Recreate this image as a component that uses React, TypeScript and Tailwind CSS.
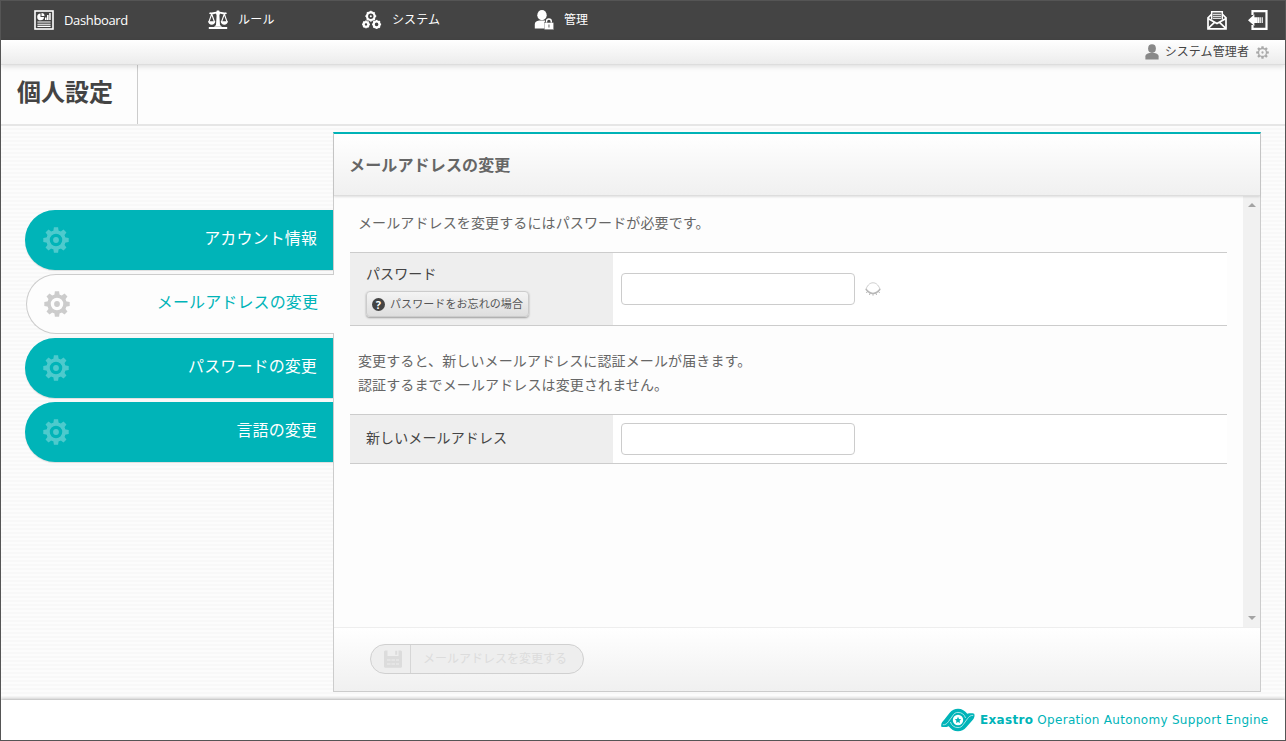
import React from "react";

const TEETH = [0, 45, 90, 135, 180, 225, 270, 315];

function Gear({ className = "", ring = 3.5, hole = 2, dot = true }: { className?: string; ring?: number; hole?: number; dot?: boolean }) {
  return (
    <svg viewBox="0 0 26 26" className={className} fill="currentColor">
      <g>
        {TEETH.map((a) => (
          <path key={a} d="M10.300 4.400 10.900.3h4.200l.6 4.100z" transform={`rotate(${a} 13 13)`} />
        ))}
        <circle cx="13" cy="13" r="8" fill="none" stroke="currentColor" strokeWidth={ring} />
        {dot && <circle cx="13" cy="13" r={hole + 0.9} />}
      </g>
    </svg>
  );
}

function ReportIcon() {
  return (
    <svg viewBox="0 0 20 20" className="h-5 w-5 shrink-0">
      <rect x="1" y="1" width="18" height="18" fill="none" stroke="#fff" strokeWidth="1.6" />
      <path d="M6.500 3.500A3.400 3.400 0 1 0 10 7H6.500z" fill="#fff" />
      <path d="M7.500 3v3h3a3 3 0 0 0-3-3zM11 7.500h1.600V10H11zM13 5h1.600v5H13zM15.200 3h1.500v7h-1.500z" fill="#fff" />
      <path d="M3.400 12h13.200M3.400 14.200h13.200M3.400 16.400h13.200" stroke="#fff" strokeWidth="1.100" />
    </svg>
  );
}

function ScalesIcon() {
  return (
    <svg viewBox="0 0 20 20" className="h-5 w-5 shrink-0" fill="none" stroke="#fff">
      <path d="M1.500 3c3 1.500 5.500-.6 8.500-.6s5.500 2.100 8.500.6" strokeWidth="1.800" />
      <path d="M3.700 4 .9 12M3.700 4l2.800 8M16.300 4l-2.800 8M16.300 4l2.800 8" strokeWidth="1.100" />
      <path d="M.1 11.300h7.200c-.2 2.300-1.600 3.500-3.600 3.500s-3.400-1.200-3.600-3.500zM12.700 11.300h7.200c-.2 2.300-1.600 3.500-3.600 3.500s-3.400-1.200-3.600-3.500z" fill="#fff" stroke="none" />
      <path d="M8.800.5h2.400l.8 3-.6 2 .6 9.500 2 1.700H6L8 15l.6-9.500-.6-2z" fill="#fff" stroke="none" />
      <path d="M.8 17h18.400v2H.8z" fill="#fff" stroke="none" />
    </svg>
  );
}

function GearsIcon() {
  const gears = [
    { x: 8.8, y: 6.2, r: 3.8 },
    { x: 4, y: 14.4, r: 2.3 },
    { x: 14.6, y: 14.4, r: 2.9 },
  ];
  return (
    <svg viewBox="0 0 20 20" className="h-5 w-5 shrink-0" fill="none" stroke="#fff">
      {gears.map((g) => (
        <g key={g.x}>
          <circle cx={g.x} cy={g.y} r={g.r} strokeWidth="2.200" />
          {TEETH.map((a) => (
            <path key={a} d={`M${g.x} ${g.y - g.r - 0.5}v-1.1`} strokeWidth="1.800" transform={`rotate(${a} ${g.x} ${g.y})`} />
          ))}
        </g>
      ))}
      <circle cx="8.800" cy="6.200" r="1" fill="#fff" stroke="none" />
    </svg>
  );
}

function UserLockIcon() {
  return (
    <svg viewBox="0 0 20 20" className="h-5 w-5 shrink-0" fill="#fff">
      <ellipse cx="8" cy="5.200" rx="4.700" ry="5.100" />
      <path d="M.8 18.500v-4.600c0-2 1.600-2.600 4.300-3.400H11l3.200 1.200-2.400 3.100v3.700z" />
      <path d="M12.500 13v-1.600a2.400 2.400 0 0 1 4.800 0V13" fill="none" stroke="#444" strokeWidth="3.200" />
      <path d="M12.500 13v-1.600a2.400 2.400 0 0 1 4.800 0V13" fill="none" stroke="#fff" strokeWidth="1.400" />
      <rect x="10.400" y="12.600" width="9.200" height="7" stroke="#444" strokeWidth=".3" />
      <path d="M14.300 14.400h1.300v3h-1.300z" fill="#888" />
    </svg>
  );
}

function MailIcon() {
  return (
    <svg viewBox="0 0 20 20" className="h-5 w-5 shrink-0" fill="none" stroke="#fff">
      <path d="M1 7.800 4.800 4M19 7.800 15.200 4M1 7.200v11.600h18V7.200" strokeWidth="1.700" />
      <path d="M4.700 9.500V1.700h10.600v7.800" strokeWidth="1.500" />
      <path d="M6 4.300h8M6 6.300h8M6 8.300h8" strokeWidth="1.200" opacity=".8" />
      <path d="m1 8.600 9 5 9-5M1.200 18.400l6.300-6M18.800 18.400l-6.300-6" strokeWidth="1.700" />
    </svg>
  );
}

function LogoutIcon() {
  return (
    <svg viewBox="0 0 20 20" className="h-5 w-5 shrink-0">
      <path d="M4.500 4.900V1.200h14v17.600h-14v-3.700" fill="none" stroke="#fff" strokeWidth="2.200" />
      <path d="M0 10.200 6.400 4.300v3h3v5.800h-3v3z" fill="#fff" />
      <path d="M9.400 7.300h2.200v5.800H9.400zM12.200 7.300h1.100v5.800h-1.100zM13.900 7.300h.9v5.800h-.9z" fill="#fff" />
    </svg>
  );
}

function UserIcon() {
  return (
    <svg viewBox="0 0 14 16" className="h-4 w-3.5 shrink-0" fill="#888">
      <ellipse cx="7" cy="4.600" rx="3.900" ry="4.300" />
      <path d="M.4 15.400v-3.200c0-1.800 1.500-2.500 4.100-3.200h5c2.600.7 4.100 1.400 4.100 3.200v3.200z" />
    </svg>
  );
}

function ClosedEyeIcon() {
  return (
    <svg viewBox="0 0 16 14" className="h-3.5 w-4 shrink-0" fill="none" stroke="#c8c8c8">
      <path d="M1 7C3 2.300 5.400.8 8 .8s5 1.500 7 6.200" strokeWidth=".9" />
      <path d="M.8 7C3 10 5.300 11.400 8 11.400s5-1.400 7.200-4.400" stroke="#b8b8b8" strokeWidth="1.500" />
      <path d="M2.700 9.200 1.300 11M5.200 11l-.8 2M8 11.400v2.300M10.800 11l.8 2M13.300 9.200l1.400 1.800" stroke="#b8b8b8" />
    </svg>
  );
}

function SaveIcon() {
  return (
    <svg viewBox="0 0 18 18" className="h-[18px] w-[18px] shrink-0">
      <path d="M0 1.500 1 .5h2.500V6h11V.5H17l1 1V17l-1 .8H1L0 17z" fill="#dcdcdc" />
      <path d="M11.200.8h2v4h-2z" fill="#dcdcdc" />
      <path d="M3 10h3.500M7.500 10H11M12 10h3M3 14h3.500M7.500 14H11M12 14h3" stroke="#eee" strokeWidth="1.200" />
    </svg>
  );
}

function Logo() {
  return (
    <svg viewBox="0 0 34 24" className="h-6 w-[34px] shrink-0" fill="none">
      <path
        d="M.3 18.800C-.2 15.800 1 13.800 3 12L8.500 5C11 2 13.800.8 17 .8c4 0 7 2 9.300 5C28.500 5.200 31 5.200 33.200 5.700c.9 2.400 0 5-2.200 7L25.500 19c-2.500 3-5.300 4.200-8.500 4.200-4 0-7-2-9.300-5-2.200.9-4.700 1.200-7.400.6z"
        fill="#00b4b8"
      />
      <path d="M1.800 16.800c2.800.2 4.200-1.300 5.700-3.300l4-5.500C13 5.300 14.800 4.400 17 4.400c3.800 0 6.300 2 7.600 5.600" stroke="#b5e9eb" strokeWidth=".9" />
      <path d="M32.200 7.400c-2.800-.2-4.200 1.300-5.700 3.300l-4 5.500c-1.500 2.500-3.300 3.400-5.500 3.400-3.800 0-6.300-2-7.600-5.600" stroke="#b5e9eb" strokeWidth=".9" />
      <circle cx="17" cy="12" r="5.200" fill="#fff" />
      <path d="m17 8.700 1 2.200 2.300.3-1.700 1.600.4 2.300-2-1.100-2 1.100.4-2.300-1.700-1.600 2.300-.3z" fill="#00b4b8" />
    </svg>
  );
}

const NAV = [
  { label: "Dashboard", icon: <ReportIcon />, box: "w-[174px]", text: "text-[13px] tracking-[-0.35px] -mt-px" },
  { label: "ルール", icon: <ScalesIcon />, box: "w-[154px]", text: "text-xs tracking-[0.2px]" },
  { label: "システム", icon: <GearsIcon />, box: "w-[172px]", text: "text-xs tracking-[0.1px]" },
  { label: "管理", icon: <UserLockIcon />, box: "w-[120px]", text: "text-xs" },
];

const TABS = ["アカウント情報", "メールアドレスの変更", "パスワードの変更", "言語の変更"];
const ACTIVE_TAB = 1;

function SideTab({ label, active }: { label: string; active: boolean }) {
  return (
    <li
      className={
        active
          ? "relative z-10 -mr-px ml-px flex h-[60px] items-center justify-between rounded-l-full border border-r-0 border-[#ccc] bg-[#fdfdfd] pr-4 pl-[17px] text-[#00b4b8]"
          : "flex h-[60px] items-center justify-between rounded-l-full bg-[#00b4b8] pr-4 pl-[18px] text-white shadow-[0_1px_1px_#ddd]"
      }
    >
      <Gear className={active ? "h-[26px] w-[26px] text-[#ccc]" : "h-[26px] w-[26px] opacity-30"} />
      <span className="-mt-1 text-base leading-6 tracking-[0.12px]">{label}</span>
    </li>
  );
}

export default function App() {
  return (
    <div className="flex h-[741px] w-[1286px] flex-col overflow-hidden border border-[#555] bg-white font-['Open_Sans','Noto_Sans_CJK_JP',sans-serif] text-[#444]">
      <header className="flex h-[39px] shrink-0 items-center bg-[#444] pr-[17px] pb-px pl-[33px] text-white">
        <nav className="flex flex-1">
          {NAV.map((n) => (
            <a key={n.label} className={`flex items-center gap-2.5 ${n.box}`}>
              {n.icon}
              <span className={`leading-5 ${n.text}`}>{n.label}</span>
            </a>
          ))}
        </nav>
        <div className="flex items-center gap-[21px]">
          <MailIcon />
          <LogoutIcon />
        </div>
      </header>

      <div className="relative z-10 flex h-[25px] shrink-0 items-center justify-end border-b border-[#ddd] bg-linear-to-b from-white to-[#ececec] pr-4 shadow-[0_2px_5px_rgba(0,0,0,0.12)]">
        <UserIcon />
        <span className="ml-1.5 text-xs leading-5 tracking-[0.1px]">システム管理者</span>
        <Gear className="ml-[7px] h-[13px] w-[13px] text-[#aaa]" ring={2.6} hole={1.4} />
      </div>

      <div className="flex h-[61px] shrink-0 border-b-2 border-[#e6e6e6] bg-[#fdfdfd]">
        <h1 className="flex w-[137px] items-center border-r border-[#ccc] pb-1.5 pl-4 text-2xl leading-8 font-bold">個人設定</h1>
      </div>

      <main className="flex min-h-0 flex-1 bg-[repeating-linear-gradient(to_bottom,#fcfcfc_0px,#fcfcfc_2px,#f8f8f8_2px,#f8f8f8_4px)] pt-[6px] pr-6 pb-2 pl-6">
        <ul className="flex w-[308px] shrink-0 flex-col gap-1 pt-[78px]">
          {TABS.map((t, i) => (
            <SideTab key={t} label={t} active={i === ACTIVE_TAB} />
          ))}
        </ul>

        <section className="flex w-[928px] flex-col border border-t-2 border-[#ccc] border-t-[#00b4b8] bg-[#fdfdfd]">
          <h2 className="relative flex h-[62px] shrink-0 items-center border-b border-[#ddd] bg-linear-to-b from-white to-[#f0f0f0] pl-[15px] text-base font-bold tracking-[0.15px] text-[#666] shadow-[0_1px_2px_rgba(0,0,0,0.12)]">
            メールアドレスの変更
          </h2>

          <div className="flex min-h-0 flex-1">
            <div className="flex-1 pr-4 pl-4 text-sm tracking-[0.12px]">
              <p className="pt-[15px] pl-2 leading-6 text-[#666]">メールアドレスを変更するにはパスワードが必要です。</p>
              <div className="mt-[17px] flex h-[74px] border-y border-[#ccc] bg-white">
                <div className="flex w-[263px] flex-col items-start bg-[#eee] pt-[9px] pl-4">
                  <span className="leading-6">パスワード</span>
                  <button className="mt-[5px] flex h-[26px] w-[163px] items-center rounded-sm border border-[#ccc] bg-linear-to-b from-[#f4f4f4] to-[#dedede] pl-[5px] text-[11px] text-[#555] shadow-[0_1px_2px_rgba(0,0,0,0.35)]">
                    <span className="mr-[5px] flex h-[13px] w-[13px] shrink-0 items-center justify-center rounded-full bg-[#444] text-[11px] leading-none font-bold text-white">?</span>
                    <span className="tracking-[0.08px] whitespace-nowrap">パスワードをお忘れの場合</span>
                  </button>
                </div>
                <div className="flex items-center gap-2.5 pl-2">
                  <input className="h-8 w-[234px] rounded-sm border border-[#ccc] bg-white" />
                  <ClosedEyeIcon />
                </div>
              </div>
              <p className="mt-[23px] pl-2 leading-6 text-[#666]">
                変更すると、新しいメールアドレスに認証メールが届きます。
                <br />
                認証するまでメールアドレスは変更されません。
              </p>
              <div className="mt-[17px] flex h-[50px] border-y border-[#ccc] bg-white">
                <div className="flex w-[263px] items-center bg-[#eee] pb-0.5 pl-4">新しいメールアドレス</div>
                <div className="flex items-center pl-2">
                  <input className="h-8 w-[234px] rounded-sm border border-[#ccc] bg-white" />
                </div>
              </div>
            </div>
            <div className="flex w-[17px] flex-col items-center justify-between bg-[#f1f1f1] pt-[7px] pb-[7px]">
              <svg viewBox="0 0 8 4" className="h-1 w-2"><path d="M0 4 4 0l4 4z" fill="#a3a3a3" /></svg>
              <svg viewBox="0 0 8 4" className="h-1 w-2"><path d="m0 0 4 4 4-4z" fill="#a3a3a3" /></svg>
            </div>
          </div>

          <div className="flex h-16 shrink-0 items-center border-t border-[#eee] bg-linear-to-b from-white to-[#f0f0f0] pb-0.5 pl-9">
            <button className="flex h-[30px] w-[214px] items-center rounded-full border border-[#d0d0d0] bg-[#eee] text-xs text-[#dcdcdc]">
              <span className="flex h-full w-10 items-center border-r border-[#d6d6d6] pl-[13px]">
                <SaveIcon />
              </span>
              <span className="pl-3 whitespace-nowrap">メールアドレスを変更する</span>
            </button>
          </div>
        </section>
      </main>

      <footer className="relative flex h-10 shrink-0 items-center justify-end bg-white pr-4 font-['DejaVu_Sans',sans-serif] text-xs text-[#00b4b8] shadow-[0_-1px_3px_rgba(0,0,0,0.3)]">
        <Logo />
        <p className="ml-[5px] w-[289px] tracking-[0.3px] whitespace-nowrap"><b>Exastro</b> Operation Autonomy Support Engine</p>
      </footer>
    </div>
  );
}
